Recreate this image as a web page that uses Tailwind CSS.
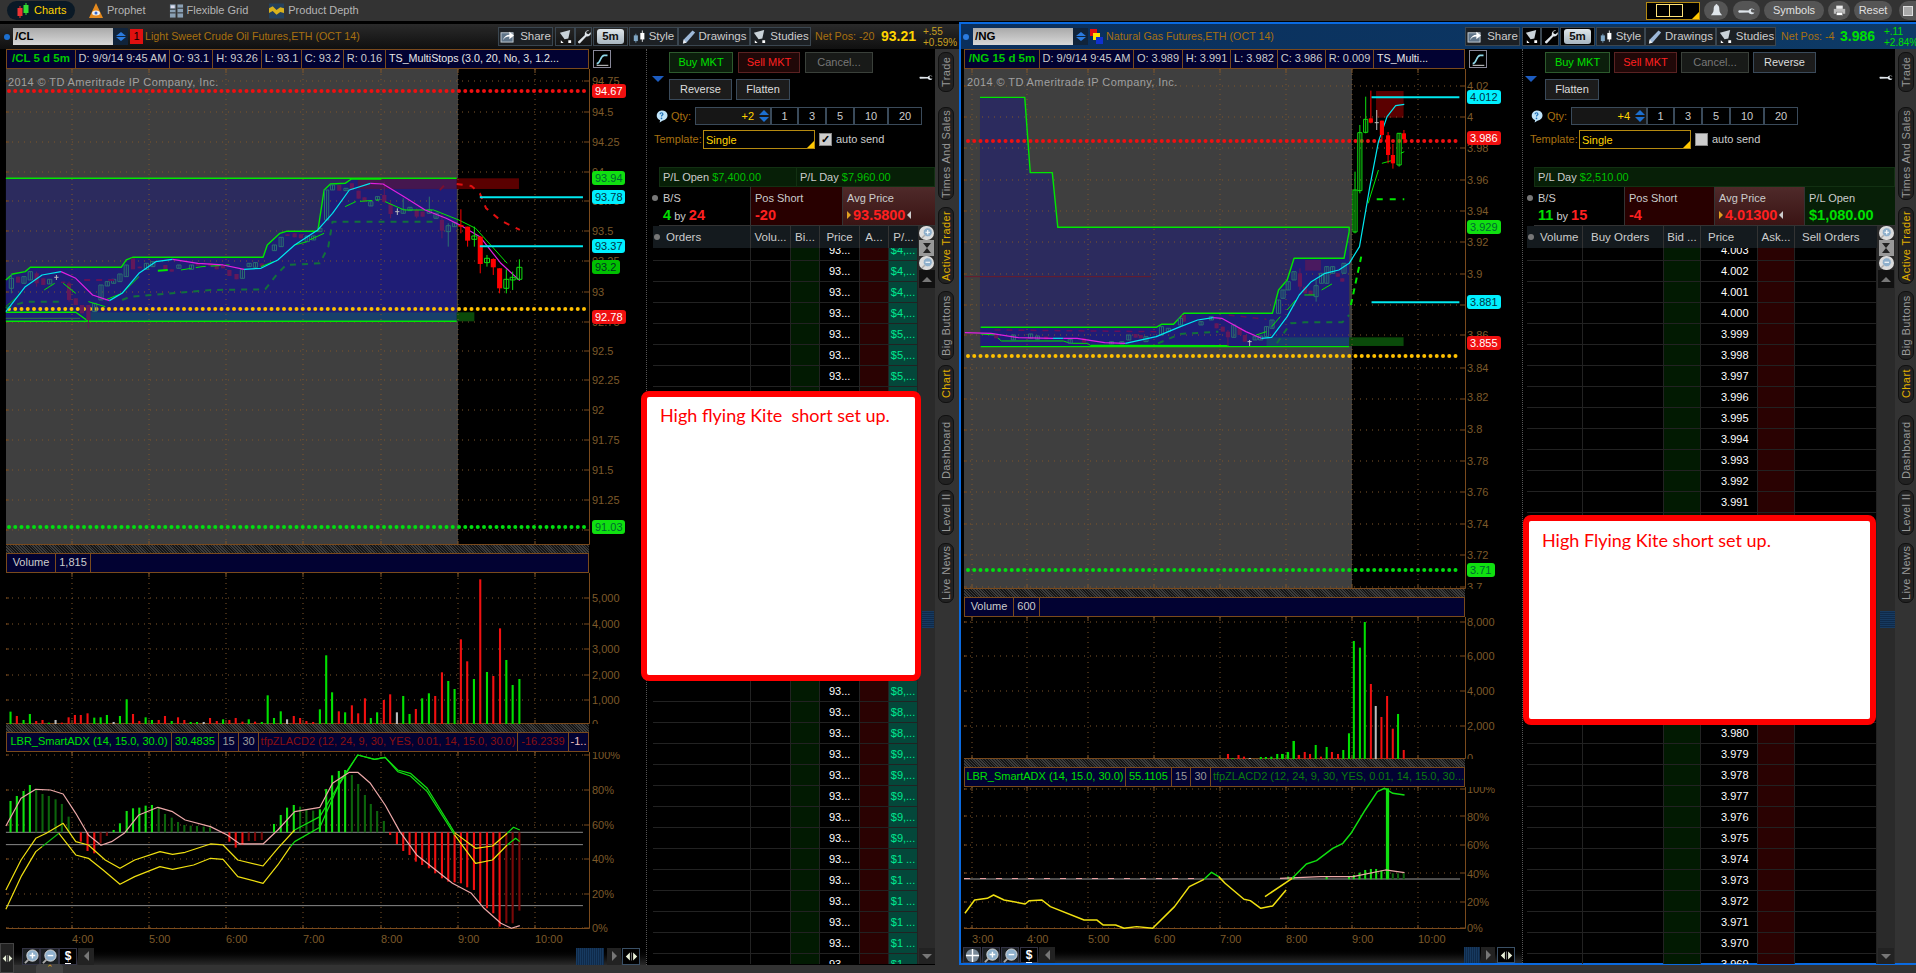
<!DOCTYPE html>
<html lang="en">
<head>
<meta charset="UTF-8">
<title>Charts - Active Trader</title>
<script src="https://cdn.jsdelivr.net/npm/@tailwindcss/browser@4"></script>
</head>
<body class="bg-[#333]">
<svg class="hidden">
  <symbol id="i-share" viewBox="0 0 16 14"><rect x="1" y="3" width="13" height="10" fill="#5f7488" stroke="#c5ced6"/><path d="M3 11c1-4 4-6 7-6V2l5 4-5 4V7c-3 0-5 1-7 4z" fill="#fff"/></symbol>
  <symbol id="i-studies" viewBox="0 0 16 16"><path d="M2 4l11-3-2 9-4 1z" fill="#c9d2d8"/><path d="M3 12v3h3zM11 12h3v3h-3z" fill="#fff"/></symbol>
  <symbol id="i-wrench" viewBox="0 0 16 16"><path d="M14 1.500a4 4 0 0 0-4.500 5L2 13.500l.5 1.500 1.500.500 7-7.500a4 4 0 0 0 4.800-4.500l-2.500 2-2-.6-.5-2z" fill="#dfe5ea"/></symbol>
  <symbol id="i-style" viewBox="0 0 16 16"><rect x="1" y="6" width="5" height="7" fill="#7fa6c4"/><path d="M3.500 4v11" stroke="#7fa6c4"/><rect x="9" y="3" width="5" height="8" fill="#fff"/><path d="M11.500 0v14" stroke="#fff"/></symbol>
  <symbol id="i-pencil" viewBox="0 0 16 16"><path d="M12 1l3 2.500L5 15l-4 1 1-4.500z" fill="#9db8d8"/><path d="M2 11.500L5 15l-4 1z" fill="#eee"/></symbol>
  <symbol id="i-charts" viewBox="0 0 16 16"><path d="M5 3v12" stroke="#e33"/><rect x="2.500" y="5" width="5" height="8" fill="#e33"/><path d="M11 0v12" stroke="#3d3"/><rect x="8.500" y="2" width="5" height="8" fill="#3d3"/></symbol>
  <symbol id="i-prophet" viewBox="0 0 16 16"><path d="M8 0l7 15H1z" fill="#e58a1e"/><ellipse cx="8" cy="10" rx="4" ry="2.500" fill="#eee"/><circle cx="8" cy="10" r="1.500" fill="#36c"/></symbol>
  <symbol id="i-grid" viewBox="0 0 16 16"><rect x="1" y="1" width="6" height="14" fill="#8aa0b4"/><rect x="9" y="1" width="6" height="14" fill="#8aa0b4"/><path d="M1 6h6M1 10h6M9 5h6M9 10h6" stroke="#222"/><rect x="2" y="2" width="4" height="3" fill="#dde"/></symbol>
  <symbol id="i-depth" viewBox="0 0 16 16"><rect width="16" height="16" fill="#24405c"/><path d="M0 5l4-2 4 4 4-3 4 1v5l-4-1-4 3-4-4-4 2z" fill="#d8b21e"/></symbol>
  <symbol id="i-bell" viewBox="0 0 16 16"><path d="M8 1c-1 0-1 1-1 1-2 1-2 3-2 5 0 3-2 5-3 6h12c-1-1-3-3-3-6 0-2 0-4-2-5 0 0 0-1-1-1z" fill="#dfe5ea"/></symbol>
  <symbol id="i-print" viewBox="0 0 16 16"><rect x="4" y="2" width="8" height="4" fill="#eee"/><rect x="1" y="6" width="14" height="6" fill="#bbb"/><rect x="4" y="10" width="8" height="4" fill="#fff" stroke="#333" stroke-width=".5"/></symbol>
  <symbol id="i-zoomin" viewBox="0 0 16 16"><circle cx="9" cy="7" r="6" fill="#8fb0cc" stroke="#ddd"/><path d="M6 7h6M9 4v6" stroke="#fff" stroke-width="1.500"/><path d="M5 11l-4 4" stroke="#aaa" stroke-width="2"/></symbol>
  <symbol id="i-zoomout" viewBox="0 0 16 16"><circle cx="9" cy="7" r="6" fill="#8fb0cc" stroke="#ddd"/><path d="M6 7h6" stroke="#fff" stroke-width="1.500"/><path d="M5 11l-4 4" stroke="#aaa" stroke-width="2"/></symbol>
  <symbol id="i-cross" viewBox="0 0 16 16"><circle cx="8" cy="8" r="7" fill="#7a8a99"/><path d="M8 1v14M1 8h14" stroke="#fff" stroke-width="1.500"/></symbol>
  <symbol id="i-expand" viewBox="0 0 16 16"><path d="M6 3v10L1 8zM10 3v10l5-5z" fill="#e8f0d8"/><path d="M8 3v10" stroke="#888"/></symbol>
  <symbol id="i-squiggle" viewBox="0 0 18 18"><path d="M2 14c5 0 4-10 9-10h4" fill="none" stroke="#8fd8e8" stroke-width="2"/><path d="M2 16h14" stroke="#fff"/></symbol>
  <symbol id="i-help" viewBox="0 0 14 14"><path d="M7 1a6 5.500 0 0 1 1 11l-3 2 .5-2.500A6 5.500 0 0 1 7 1z" fill="#bfe4fa"/><path d="M5.500 5c0-2 3-2 3 0 0 1-1.500 1-1.500 2.500" fill="none" stroke="#1c6fb8" stroke-width="1.300"/><circle cx="7" cy="9.500" r=".9" fill="#1c6fb8"/></symbol>
</svg>

<div class="relative w-[1916px] h-[973px] overflow-hidden flex flex-col text-[11px] text-[#ccc] font-['Liberation_Sans',Arial,sans-serif]">

  <!-- application top bar -->
  <div class="h-[21px] shrink-0 flex items-center bg-[#333] text-[11px] text-[#b5b5b5]">
    <div class="ml-[7px] w-[68px] h-[19px] rounded-full bg-[#0a1926] flex items-center pl-[8px] gap-[3px] text-[#ffd400]"><svg class="w-[16px] h-[16px]"><use href="#i-charts"/></svg>Charts</div>
    <svg class="ml-[13px] w-[16px] h-[16px]"><use href="#i-prophet"/></svg><span class="ml-[3px]">Prophet</span>
    <svg class="ml-[23px] w-[15px] h-[16px]"><use href="#i-grid"/></svg><span class="ml-[3px]">Flexible Grid</span>
    <svg class="ml-[21px] w-[15px] h-[16px]"><use href="#i-depth"/></svg><span class="ml-[4px]">Product Depth</span>
    <div class="ml-auto flex items-center text-[#e0e0e0]">
      <div class="relative w-[54px] h-[18px] bg-black border border-[#b58a10] flex items-center pl-[9px]"><span class="w-[14px] h-[13px] border border-[#ffe27a]"></span><span class="w-[14px] h-[13px] border border-[#ffe27a] -ml-px"></span><span class="absolute right-0 bottom-0 border-l-[7px] border-b-[7px] border-l-transparent border-b-[#ffc800]"></span></div>
      <div class="ml-[4px] w-[24px] h-[19px] rounded-full bg-[#555] flex items-center justify-center"><svg class="w-[15px] h-[15px]"><use href="#i-bell"/></svg></div>
      <div class="ml-[5px] w-[27px] h-[19px] rounded-full bg-[#555] flex items-center justify-center"><svg class="w-[15px] h-[15px] rotate-45"><use href="#i-wrench"/></svg></div>
      <div class="ml-[4px] w-[60px] h-[19px] rounded-full bg-[#555] flex items-center justify-center">Symbols</div>
      <div class="ml-[4px] w-[22px] h-[19px] rounded-full bg-[#555] flex items-center justify-center"><svg class="w-[13px] h-[13px]"><use href="#i-print"/></svg></div>
      <div class="ml-[4px] w-[38px] h-[19px] rounded-full bg-[#555] flex items-center justify-center">Reset</div>
      <div class="ml-[7px] w-[17px] h-[19px] rounded-l-full bg-[#555] flex items-center pl-[4px]"><span class="w-[10px] h-[10px] bg-[#aaa] border border-[#ddd]"></span></div>
    </div>
  </div>
  <div class="h-px shrink-0 bg-black"></div>

  <div class="flex h-[943px] shrink-0">
    <!-- left window -->
    <div class="w-[959px] shrink-0 flex flex-col">
      <div class="h-[2px] bg-black"></div>
      <div class="h-[25px] shrink-0 flex items-center bg-linear-to-b from-[#2a2a2a] to-[#101010]">
        <span class="ml-[4px] w-[6px] h-[6px] rounded-full bg-[#1c6fd0]"></span>
        <div class="ml-[3px] w-[100px] h-[17px] bg-linear-to-b from-[#aaa] to-[#d8d8d8] text-black font-bold text-[11.500px] pl-[2px] leading-[17px]">/CL</div>
        <div class="w-[15px] h-[17px] bg-[#10233a] flex flex-col items-center justify-center gap-px"><span class="border-x-[5px] border-b-[4px] border-x-transparent border-b-[#2b7be0]"></span><span class="border-x-[5px] border-t-[4px] border-x-transparent border-t-[#2b7be0]"></span></div>
        <div class="ml-[2px] w-[13px] h-[15px] bg-[#e01010] text-black text-[11px] text-center leading-[15px]">1</div>
        <span class="ml-[2px] text-[#a87010] text-[10.700px]">Light Sweet Crude Oil Futures,ETH (OCT 14)</span>
        <div class="ml-auto flex items-center h-[19px]">
          <div class="w-[55px] h-[19px] border border-[#3a4650] bg-[#1c2024] flex items-center justify-center gap-[5px] text-[11.500px]"><svg class="w-[15px] h-[13px]"><use href="#i-share"/></svg>Share</div>
          <div class="ml-[2px] w-[20px] h-[19px] border border-[#3a4650] flex items-center justify-center"><svg class="w-[15px] h-[15px]"><use href="#i-studies"/></svg></div>
          <div class="w-[17px] h-[19px] border border-[#3a4650] flex items-center justify-center"><svg class="w-[15px] h-[15px]"><use href="#i-wrench"/></svg></div>
          <div class="ml-px w-[35px] h-[19px] border border-[#3a4650] flex items-center justify-center"><span class="w-[27px] h-[15px] rounded-[3px] bg-linear-to-b from-[#dfe6ea] to-[#a8b6c0] text-[#111] font-bold text-[11.500px] text-center leading-[15px]">5m</span></div>
          <div class="ml-px w-[49px] h-[19px] border border-[#3a4650] bg-[#1c2024] flex items-center justify-center gap-[3px] text-[11.500px]"><svg class="w-[13px] h-[14px]"><use href="#i-style"/></svg>Style</div>
          <div class="w-[72px] h-[19px] border border-[#3a4650] bg-[#1c2024] flex items-center justify-center gap-[3px] text-[11.500px]"><svg class="w-[14px] h-[15px]"><use href="#i-pencil"/></svg>Drawings</div>
          <div class="w-[61px] h-[19px] border border-[#3a4650] bg-[#1c2024] flex items-center justify-center gap-[3px] text-[11.500px]"><svg class="w-[15px] h-[15px]"><use href="#i-studies"/></svg>Studies</div>
          <span class="ml-[4px] w-[61px] text-[#a87010] text-[10.700px] whitespace-nowrap">Net Pos: -20</span>
          <span class="ml-[5px] w-[36px] text-[#ffd400] font-bold text-[14px]">93.21</span>
          <div class="ml-[6px] w-[36px] text-[#c8a020] text-[10px] leading-[11px]">+.55<br>+0.59%</div>
        </div>
      </div>
      <div class="flex flex-1 min-h-0">
        <!-- chart column -->
        <div class="w-[646px] shrink-0 flex flex-col bg-black">
          <div class="flex items-center h-[20px] shrink-0">
            <div class="ml-[6px] w-[583px] h-[20px] flex bg-[#020232] border border-[#7a4a1c] leading-[17px]">
              <div class="w-[69px] border-r border-[#7a4a1c] text-center text-[#00c800] font-bold text-[11.500px]">/CL 5 d 5m</div>
              <div class="w-[94px] border-r border-[#7a4a1c] text-center">D: 9/9/14 9:45 AM</div>
              <div class="w-[43px] border-r border-[#7a4a1c] text-center">O: 93.1</div>
              <div class="w-[49px] border-r border-[#7a4a1c] text-center">H: 93.26</div>
              <div class="w-[40px] border-r border-[#7a4a1c] text-center">L: 93.1</div>
              <div class="w-[42px] border-r border-[#7a4a1c] text-center">C: 93.2</div>
              <div class="w-[42px] border-r border-[#7a4a1c] text-center">R: 0.16</div>
              <div class="flex-1 pl-[3px] text-[#e8e8e8] text-[10.700px]">TS_MultiStops (3.0, 20, No, 3, 1.2...</div>
            </div>
            <div class="ml-[4px] w-[18px] h-[18px] border border-[#889] flex items-center justify-center"><svg class="w-[15px] h-[15px]"><use href="#i-squiggle"/></svg></div>
          </div>
          <svg id="lp" class="block shrink-0 w-[646px] h-[476px]" viewBox="0 69 646 476"></svg>
          <div class="ml-[6px] w-[583px] h-[8px] shrink-0 bg-[repeating-linear-gradient(45deg,#3c3c3c_0_1px,#161616_1px_2px)]"></div>
          <div class="ml-[6px] w-[583px] h-[20px] shrink-0 flex bg-[#020232] border border-[#7a4a1c] leading-[17px]">
            <div class="w-[49px] border-r border-[#7a4a1c] text-center">Volume</div>
            <div class="w-[35px] border-r border-[#7a4a1c] text-center">1,815</div>
          </div>
          <svg id="lv" class="block shrink-0 w-[646px] h-[151px]" viewBox="0 573 646 151"></svg>
          <div class="ml-[6px] w-[583px] h-[8px] shrink-0 bg-[repeating-linear-gradient(45deg,#3c3c3c_0_1px,#161616_1px_2px)]"></div>
          <div class="ml-[6px] w-[583px] h-[20px] shrink-0 flex bg-[#020232] border border-[#7a4a1c] leading-[17px] whitespace-nowrap overflow-hidden">
            <div class="w-[165px] border-r border-[#7a4a1c] text-center text-[#00e000]">LBR_SmartADX (14, 15.0, 30.0)</div>
            <div class="w-[47px] border-r border-[#7a4a1c] text-center text-[#00e000]">30.4835</div>
            <div class="w-[20px] border-r border-[#7a4a1c] text-center text-[#999]">15</div>
            <div class="w-[20px] border-r border-[#7a4a1c] text-center text-[#999]">30</div>
            <div class="w-[259px] border-r border-[#7a4a1c] text-center text-[#8a1010]">tfpZLACD2 (12, 24, 9, 30, YES, 0.01, 14, 15.0, 30.0)</div>
            <div class="w-[51px] border-r border-[#7a4a1c] text-center text-[#8a1010]">-16.2339</div>
            <div class="flex-1 text-center text-[#f0c0c0]">-1..</div>
          </div>
          <svg id="li" class="block shrink-0 w-[646px] h-[195px]" viewBox="0 752 646 195"></svg>
          <div class="h-[18px] shrink-0 flex items-center bg-linear-to-b from-black to-[#2a2a2a]">
            <div class="ml-[22px] w-[18px] h-[17px] border border-[#334] bg-[#1c2024] flex items-center justify-center"><svg class="w-[15px] h-[15px]"><use href="#i-zoomin"/></svg></div>
            <div class="w-[19px] h-[17px] border border-[#334] bg-[#1c2024] flex items-center justify-center"><svg class="w-[15px] h-[15px]"><use href="#i-zoomout"/></svg></div>
            <div class="w-[18px] h-[17px] border border-[#334] bg-black text-center text-white font-bold text-[12px] leading-[15px]"><span class="border-b border-white">$</span></div>
            <div class="ml-[1px] w-[16px] h-[17px] bg-[#222] flex items-center justify-center"><span class="border-y-[5px] border-r-[5px] border-y-transparent border-r-[#777]"></span></div>
            <div class="ml-auto w-[28px] h-[17px] bg-[repeating-linear-gradient(90deg,#173a60_0_1px,#0f2a4a_1px_2px)]"></div>
            <div class="ml-[3px] w-[14px] h-[17px] bg-[#222] flex items-center justify-center"><span class="border-y-[5px] border-l-[5px] border-y-transparent border-l-[#777]"></span></div>
            <div class="ml-px mr-[6px] w-[18px] h-[17px] border border-[#3a5066] bg-black flex items-center justify-center"><svg class="w-[15px] h-[13px]"><use href="#i-expand"/></svg></div>
          </div>
        </div>
        <!-- trade column -->
        <div class="relative w-[289px] shrink-0 bg-black border-l border-dotted border-[#555]">
          <span class="absolute left-[5px] top-[27px] border-x-[6px] border-t-[6px] border-x-transparent border-t-[#1c5cc0]"></span>
          <svg class="absolute left-[271px] top-[22px] w-[16px] h-[12px] rotate-45"><use href="#i-wrench"/></svg>
          <div class="pt-[3px] pl-[22px] flex gap-[5px]">
            <div class="w-[64px] h-[21px] border border-[#2d5a2d] bg-[#0c1e0c] text-[#00e000] flex items-center justify-center">Buy MKT</div>
            <div class="w-[62px] h-[21px] border border-[#5a2222] bg-[#200808] text-[#ff2020] flex items-center justify-center">Sell MKT</div>
            <div class="w-[68px] h-[21px] border border-[#3a403a] bg-[#181a18] text-[#777] flex items-center justify-center">Cancel...</div>
          </div>
          <div class="mt-[6px] pl-[22px] flex gap-[4px]">
            <div class="w-[63px] h-[21px] border border-[#3a4a5a] bg-[#1c1c1c] text-[#ddd] flex items-center justify-center">Reverse</div>
            <div class="w-[54px] h-[21px] border border-[#3a4a5a] bg-[#1c1c1c] text-[#ddd] flex items-center justify-center">Flatten</div>
          </div>
          <div class="mt-[7px] h-[18px] flex items-center">
            <svg class="ml-[8px] w-[13px] h-[14px]"><use href="#i-help"/></svg>
            <span class="ml-[3px] w-[24px] text-[#a87010]">Qty:</span>
            <div class="w-[76px] h-[18px] border border-[#3a4a5a] bg-[#161616] flex items-center justify-end text-[#ffd400]">+2<div class="ml-[3px] w-[13px] flex flex-col items-center gap-[2px]"><span class="border-x-[5px] border-b-[5px] border-x-transparent border-b-[#1c6fd0]"></span><span class="border-x-[5px] border-t-[5px] border-x-transparent border-t-[#1c6fd0]"></span></div></div>
            <div class="w-[27px] h-[18px] border border-[#3a4a5a] text-center leading-[16px]">1</div>
            <div class="w-[28px] h-[18px] border border-[#3a4a5a] text-center leading-[16px]">3</div>
            <div class="w-[28px] h-[18px] border border-[#3a4a5a] text-center leading-[16px]">5</div>
            <div class="w-[34px] h-[18px] border border-[#3a4a5a] text-center leading-[16px]">10</div>
            <div class="w-[34px] h-[18px] border border-[#3a4a5a] text-center leading-[16px]">20</div>
          </div>
          <div class="mt-[5px] h-[19px] flex items-center">
            <span class="ml-[7px] w-[49px] text-[#a87010]">Template:</span>
            <div class="relative w-[112px] h-[19px] border border-[#b58a10] bg-black pl-[2px] text-[#ffd400] leading-[18px]">Single<span class="absolute right-0 bottom-0 border-l-[7px] border-b-[7px] border-l-transparent border-b-[#ffc800]"></span></div>
            <div class="ml-[4px] w-[13px] h-[13px] bg-[#ccc] border border-[#888] text-black font-bold leading-[11px] text-center">✓</div>
            <span class="ml-[4px]">auto send</span>
          </div>
          <div class="mt-[18px] ml-[12px] w-[276px] h-[20px] flex bg-[#071f07] border border-[#123012] leading-[18px]">
            <div class="w-[137px] border-r border-[#123012] pl-[3px]">P/L Open <span class="text-[#00c000]">$7,400.00</span></div>
            <div class="flex-1 pl-[3px]">P/L Day <span class="text-[#00c000]">$7,960.00</span></div>
          </div>
          <div class="relative ml-[12px] w-[276px] h-[39px] flex leading-[14px] border-b border-[#333]">
            <span class="absolute -left-[7px] top-[8px] w-[6px] h-[6px] rounded-full bg-[#777]"></span>
            <div class="w-[91px] bg-black pl-[4px] pt-[4px]">B/S<div class="mt-px leading-[18px]"><span class="text-[#00e000] font-bold text-[14.500px]">4</span> by <span class="text-[#ff2020] font-bold text-[14.500px]">24</span></div></div>
            <div class="w-[92px] bg-[#280000] pl-[4px] pt-[4px] border-l border-[#333]">Pos Short<div class="mt-px leading-[18px] text-[#ff2020] font-bold text-[14.500px]">-20</div></div>
            <div class="flex-1 bg-linear-to-b from-[#4f2a2a] to-[#3a1414] pl-[4px] pt-[4px] border-l border-[#333]">Avg Price<div class="mt-px leading-[18px] flex items-center gap-[2px] text-[#ff2020] font-bold text-[14.500px]"><span class="border-y-[4px] border-l-[4px] border-y-transparent border-l-[#e0a020]"></span>93.5800<span class="border-y-[4px] border-r-[4px] border-y-transparent border-r-[#ccc]"></span></div></div>
          </div>
          <div class="flex ml-[6px]">
            <div class="w-[265px]">
              <div class="flex h-[22px] bg-[#141a1e] text-[11.500px] leading-[22px]">
                <div class="w-[98px] border-r border-[#333] flex items-center"><span class="ml-[1px] w-[6px] h-[6px] rounded-full bg-[#777]"></span><span class="ml-[6px]">Orders</span></div>
                <div class="w-[40px] border-r border-[#333] text-center">Volu...</div>
                <div class="w-[29px] border-r border-[#333] text-center">Bi...</div>
                <div class="w-[40px] border-r border-[#333] text-center">Price</div>
                <div class="w-[29px] border-r border-[#333] text-center">A...</div>
                <div class="w-[29px] text-center">P/...</div>
              </div>
              <div class="h-[716px] overflow-hidden"><div id="lrows" class="-mt-[8px]"></div></div>
            </div>
            <div class="w-[17px] flex flex-col items-center bg-[#2a2a2a]">
              <div class="w-[15px] h-[14px] bg-[#ddd] rounded-full flex items-center justify-center"><svg class="w-[12px] h-[12px]"><use href="#i-zoomin"/></svg></div>
              <div class="w-[15px] h-[16px] bg-[#999] flex flex-col items-center justify-center"><span class="border-x-[4px] border-t-[5px] border-x-transparent border-t-[#222]"></span><span class="border-x-[4px] border-b-[5px] border-x-transparent border-b-[#222]"></span></div>
              <div class="w-[15px] h-[14px] bg-[#ddd] rounded-full flex items-center justify-center"><svg class="w-[12px] h-[12px]"><use href="#i-zoomout"/></svg></div>
              <div class="w-[16px] h-[18px] bg-[#111] flex items-center justify-center"><span class="border-x-[5px] border-b-[5px] border-x-transparent border-b-[#777]"></span></div>
              <div class="mt-[323px] w-[12px] h-[17px] ml-[3px] bg-[repeating-linear-gradient(0deg,#173a60_0_1px,#0f2a4a_1px_2px)]"></div>
              <div class="mt-auto w-[16px] h-[16px] bg-[#222] flex items-center justify-center"><span class="border-x-[5px] border-t-[5px] border-x-transparent border-t-[#777]"></span></div>
            </div>
          </div>
        </div>
        <div id="lrail" class="w-[21px] shrink-0 bg-[#333] flex flex-col items-center"></div>
      </div>
    </div>

    <!-- right window -->
    <div class="w-[957px] shrink-0 flex flex-col border-2 border-r-0 border-[#0a6ae0]">
      <div class="h-[25px] shrink-0 flex items-center bg-linear-to-r from-[#0a2f5c] to-[#0d3a66]">
        <span class="ml-[2px] w-[6px] h-[6px] rounded-full bg-[#2b7be0]"></span>
        <div class="ml-[4px] w-[100px] h-[17px] bg-linear-to-b from-[#aaa] to-[#d8d8d8] text-black font-bold text-[11.500px] pl-[2px] leading-[17px]">/NG</div>
        <div class="w-[15px] h-[17px] bg-[#10233a] flex flex-col items-center justify-center gap-px"><span class="border-x-[5px] border-b-[4px] border-x-transparent border-b-[#2b7be0]"></span><span class="border-x-[5px] border-t-[4px] border-x-transparent border-t-[#2b7be0]"></span></div>
        <div class="relative ml-[2px] w-[14px] h-[15px]"><span class="absolute left-0 top-0 w-[7px] h-[7px] bg-[#e01010]"></span><span class="absolute left-[3px] top-[4px] w-[7px] h-[7px] bg-[#ffe000]"></span><span class="absolute left-[6px] top-[8px] w-[7px] h-[7px] bg-[#1030d0]"></span></div>
        <span class="ml-[2px] text-[#a87010] text-[10.700px]">Natural Gas Futures,ETH (OCT 14)</span>
        <div class="ml-auto flex items-center h-[19px]">
          <div class="w-[55px] h-[19px] border border-[#3a4650] bg-[#1c2024] flex items-center justify-center gap-[5px] text-[11.500px]"><svg class="w-[15px] h-[13px]"><use href="#i-share"/></svg>Share</div>
          <div class="ml-[2px] w-[19px] h-[19px] border border-[#3a4650] bg-black flex items-center justify-center"><svg class="w-[15px] h-[15px]"><use href="#i-studies"/></svg></div>
          <div class="w-[18px] h-[19px] border border-[#3a4650] bg-black flex items-center justify-center"><svg class="w-[15px] h-[15px]"><use href="#i-wrench"/></svg></div>
          <div class="ml-px w-[35px] h-[19px] border border-[#3a4650] bg-black flex items-center justify-center"><span class="w-[27px] h-[15px] rounded-[3px] bg-linear-to-b from-[#dfe6ea] to-[#a8b6c0] text-[#111] font-bold text-[11.500px] text-center leading-[15px]">5m</span></div>
          <div class="ml-px w-[49px] h-[19px] border border-[#3a4650] bg-[#1c2024] flex items-center justify-center gap-[3px] text-[11.500px]"><svg class="w-[13px] h-[14px]"><use href="#i-style"/></svg>Style</div>
          <div class="w-[71px] h-[19px] border border-[#3a4650] bg-[#1c2024] flex items-center justify-center gap-[3px] text-[11.500px]"><svg class="w-[14px] h-[15px]"><use href="#i-pencil"/></svg>Drawings</div>
          <div class="w-[60px] h-[19px] border border-[#3a4650] bg-[#1c2024] flex items-center justify-center gap-[3px] text-[11.500px]"><svg class="w-[15px] h-[15px]"><use href="#i-studies"/></svg>Studies</div>
          <span class="ml-[5px] w-[55px] text-[#a87010] text-[10.700px] whitespace-nowrap">Net Pos: -4</span>
          <span class="ml-[4px] w-[39px] text-[#00e000] font-bold text-[14px]">3.986</span>
          <div class="ml-[5px] w-[32px] text-[#00e000] text-[10px] leading-[11px] whitespace-nowrap">+.11<br>+2.84%</div>
        </div>
      </div>
      <div class="flex flex-1 min-h-0">
        <div class="w-[561px] shrink-0 flex flex-col bg-black">
          <div class="flex items-center h-[20px] shrink-0">
            <div class="ml-[3px] w-[501px] h-[20px] flex bg-[#020232] border border-[#7a4a1c] leading-[17px] whitespace-nowrap">
              <div class="w-[75px] border-r border-[#7a4a1c] text-center text-[#00c800] font-bold text-[11.500px]">/NG 15 d 5m</div>
              <div class="w-[94px] border-r border-[#7a4a1c] text-center">D: 9/9/14 9:45 AM</div>
              <div class="w-[49px] border-r border-[#7a4a1c] text-center">O: 3.989</div>
              <div class="w-[48px] border-r border-[#7a4a1c] text-center">H: 3.991</div>
              <div class="w-[47px] border-r border-[#7a4a1c] text-center">L: 3.982</div>
              <div class="w-[48px] border-r border-[#7a4a1c] text-center">C: 3.986</div>
              <div class="w-[48px] border-r border-[#7a4a1c] text-center">R: 0.009</div>
              <div class="flex-1 pl-[3px] text-[#e8e8e8] text-[10.700px]">TS_Multi...</div>
            </div>
            <div class="ml-[4px] w-[18px] h-[18px] border border-[#889] flex items-center justify-center"><svg class="w-[15px] h-[15px]"><use href="#i-squiggle"/></svg></div>
          </div>
          <svg id="rp" class="block shrink-0 w-[561px] h-[520px]" viewBox="961 69 561 520"></svg>
          <div class="ml-[3px] w-[501px] h-[8px] shrink-0 bg-[repeating-linear-gradient(45deg,#3c3c3c_0_1px,#161616_1px_2px)]"></div>
          <div class="ml-[3px] w-[501px] h-[20px] shrink-0 flex bg-[#020232] border border-[#7a4a1c] leading-[17px]">
            <div class="w-[49px] border-r border-[#7a4a1c] text-center">Volume</div>
            <div class="w-[26px] border-r border-[#7a4a1c] text-center">600</div>
          </div>
          <svg id="rv" class="block shrink-0 w-[561px] h-[142px]" viewBox="961 617 561 142"></svg>
          <div class="ml-[3px] w-[501px] h-[8px] shrink-0 bg-[repeating-linear-gradient(45deg,#3c3c3c_0_1px,#161616_1px_2px)]"></div>
          <div class="ml-[3px] w-[501px] h-[20px] shrink-0 flex bg-[#020232] border border-[#7a4a1c] leading-[17px] whitespace-nowrap overflow-hidden">
            <div class="w-[165px] border-r border-[#7a4a1c] text-center text-[#00e000]">LBR_SmartADX (14, 15.0, 30.0)</div>
            <div class="w-[47px] border-r border-[#7a4a1c] text-center text-[#00e000]">55.1105</div>
            <div class="w-[20px] border-r border-[#7a4a1c] text-center text-[#999]">15</div>
            <div class="w-[20px] border-r border-[#7a4a1c] text-center text-[#999]">30</div>
            <div class="flex-1 pl-[2px] text-[#0d7a0d]">tfpZLACD2 (12, 24, 9, 30, YES, 0.01, 14, 15.0, 30...</div>
          </div>
          <svg id="ri" class="block shrink-0 w-[561px] h-[160px]" viewBox="961 787 561 160"></svg>
          <div class="h-[16px] shrink-0 flex items-center bg-linear-to-b from-black to-[#2a2a2a]">
            <div class="ml-[2px] w-[18px] h-[16px] border border-[#334] bg-[#1c2024] flex items-center justify-center"><svg class="w-[15px] h-[15px]"><use href="#i-cross"/></svg></div>
            <div class="ml-px w-[18px] h-[16px] border border-[#334] bg-[#1c2024] flex items-center justify-center"><svg class="w-[15px] h-[15px]"><use href="#i-zoomin"/></svg></div>
            <div class="ml-px w-[18px] h-[16px] border border-[#334] bg-[#1c2024] flex items-center justify-center"><svg class="w-[15px] h-[15px]"><use href="#i-zoomout"/></svg></div>
            <div class="ml-px w-[18px] h-[16px] border border-[#334] bg-black text-center text-white font-bold text-[12px] leading-[14px]"><span class="border-b border-white">$</span></div>
            <div class="ml-px w-[16px] h-[16px] bg-[#222] flex items-center justify-center"><span class="border-y-[5px] border-r-[5px] border-y-transparent border-r-[#777]"></span></div>
            <div class="ml-auto w-[16px] h-[16px] bg-[repeating-linear-gradient(90deg,#173a60_0_1px,#0f2a4a_1px_2px)]"></div>
            <div class="ml-px w-[14px] h-[16px] bg-[#222] flex items-center justify-center"><span class="border-y-[5px] border-l-[5px] border-y-transparent border-l-[#777]"></span></div>
            <div class="ml-[2px] mr-[7px] w-[18px] h-[16px] border border-[#3a5066] bg-black flex items-center justify-center"><svg class="w-[15px] h-[13px]"><use href="#i-expand"/></svg></div>
          </div>
        </div>
        <div class="relative w-[373px] shrink-0 bg-black border-l border-dotted border-[#555]">
          <span class="absolute left-[2px] top-[27px] border-x-[6px] border-t-[6px] border-x-transparent border-t-[#1c5cc0]"></span>
          <svg class="absolute left-[355px] top-[22px] w-[16px] h-[12px] rotate-45"><use href="#i-wrench"/></svg>
          <div class="pt-[3px] pl-[22px] flex gap-[4px]">
            <div class="w-[65px] h-[21px] border border-[#2d5a2d] bg-[#0c1e0c] text-[#00e000] flex items-center justify-center">Buy MKT</div>
            <div class="w-[63px] h-[21px] border border-[#5a2222] bg-[#200808] text-[#ff2020] flex items-center justify-center">Sell MKT</div>
            <div class="w-[68px] h-[21px] border border-[#3a403a] bg-[#181a18] text-[#777] flex items-center justify-center">Cancel...</div>
            <div class="w-[63px] h-[21px] border border-[#3a4a5a] bg-[#1c1c1c] text-[#ddd] flex items-center justify-center">Reverse</div>
          </div>
          <div class="mt-[6px] pl-[22px]">
            <div class="w-[54px] h-[21px] border border-[#3a4a5a] bg-[#1c1c1c] text-[#ddd] flex items-center justify-center">Flatten</div>
          </div>
          <div class="mt-[7px] h-[18px] flex items-center">
            <svg class="ml-[7px] w-[13px] h-[14px]"><use href="#i-help"/></svg>
            <span class="ml-[4px] w-[24px] text-[#a87010]">Qty:</span>
            <div class="w-[76px] h-[18px] border border-[#3a4a5a] bg-[#161616] flex items-center justify-end text-[#ffd400]">+4<div class="ml-[3px] w-[13px] flex flex-col items-center gap-[2px]"><span class="border-x-[5px] border-b-[5px] border-x-transparent border-b-[#1c6fd0]"></span><span class="border-x-[5px] border-t-[5px] border-x-transparent border-t-[#1c6fd0]"></span></div></div>
            <div class="w-[27px] h-[18px] border border-[#3a4a5a] text-center leading-[16px]">1</div>
            <div class="w-[28px] h-[18px] border border-[#3a4a5a] text-center leading-[16px]">3</div>
            <div class="w-[28px] h-[18px] border border-[#3a4a5a] text-center leading-[16px]">5</div>
            <div class="w-[34px] h-[18px] border border-[#3a4a5a] text-center leading-[16px]">10</div>
            <div class="w-[34px] h-[18px] border border-[#3a4a5a] text-center leading-[16px]">20</div>
          </div>
          <div class="mt-[5px] h-[19px] flex items-center">
            <span class="ml-[7px] w-[49px] text-[#a87010]">Template:</span>
            <div class="relative w-[112px] h-[19px] border border-[#b58a10] bg-black pl-[2px] text-[#ffd400] leading-[18px]">Single<span class="absolute right-0 bottom-0 border-l-[7px] border-b-[7px] border-l-transparent border-b-[#ffc800]"></span></div>
            <div class="ml-[4px] w-[13px] h-[13px] bg-[#ccc] border border-[#888]"></div>
            <span class="ml-[4px]">auto send</span>
          </div>
          <div class="mt-[18px] ml-[11px] w-[361px] h-[20px] bg-[#071f07] border border-[#123012] leading-[18px] pl-[3px]">P/L Day <span class="text-[#00c000]">$2,510.00</span></div>
          <div class="relative ml-[11px] w-[361px] h-[39px] flex leading-[14px] border-b border-[#333]">
            <span class="absolute -left-[7px] top-[8px] w-[6px] h-[6px] rounded-full bg-[#777]"></span>
            <div class="w-[90px] bg-black pl-[4px] pt-[4px]">B/S<div class="mt-px leading-[18px]"><span class="text-[#00e000] font-bold text-[14.500px]">11</span> by <span class="text-[#ff2020] font-bold text-[14.500px]">15</span></div></div>
            <div class="w-[90px] bg-[#280000] pl-[4px] pt-[4px] border-l border-[#333]">Pos Short<div class="mt-px leading-[18px] text-[#ff2020] font-bold text-[14.500px]">-4</div></div>
            <div class="w-[90px] bg-linear-to-b from-[#4f2a2a] to-[#3a1414] pl-[4px] pt-[4px] border-l border-[#333]">Avg Price<div class="mt-px leading-[18px] flex items-center gap-[2px] text-[#ff2020] font-bold text-[14.500px]"><span class="border-y-[4px] border-l-[4px] border-y-transparent border-l-[#e0a020]"></span>4.01300<span class="border-y-[4px] border-r-[4px] border-y-transparent border-r-[#ccc]"></span></div></div>
            <div class="flex-1 bg-[#071f07] pl-[4px] pt-[4px] border-l border-[#333]">P/L Open<div class="mt-px leading-[18px] text-[#00e000] font-bold text-[14.500px]">$1,080.00</div></div>
          </div>
          <div class="flex ml-[4px]">
            <div class="w-[350px]">
              <div class="flex h-[22px] bg-[#141a1e] text-[11.500px] leading-[22px]">
                <div class="w-[56px] border-r border-[#333] flex items-center"><span class="ml-[1px] w-[6px] h-[6px] rounded-full bg-[#777]"></span><span class="ml-[6px]">Volume</span></div>
                <div class="w-[81px] border-r border-[#333] pl-[8px]">Buy Orders</div>
                <div class="w-[37px] border-r border-[#333] text-center">Bid ...</div>
                <div class="w-[57px] border-r border-[#333] pl-[7px]">Price</div>
                <div class="w-[37px] border-r border-[#333] text-center">Ask...</div>
                <div class="w-[82px] pl-[7px]">Sell Orders</div>
              </div>
              <div class="h-[716px] overflow-hidden"><div id="rrows" class="-mt-[8px]"></div></div>
            </div>
            <div class="w-[18px] flex flex-col items-center bg-[#2a2a2a]">
              <div class="w-[15px] h-[14px] bg-[#ddd] rounded-full flex items-center justify-center"><svg class="w-[12px] h-[12px]"><use href="#i-zoomin"/></svg></div>
              <div class="w-[15px] h-[16px] bg-[#999] flex flex-col items-center justify-center"><span class="border-x-[4px] border-t-[5px] border-x-transparent border-t-[#222]"></span><span class="border-x-[4px] border-b-[5px] border-x-transparent border-b-[#222]"></span></div>
              <div class="w-[15px] h-[14px] bg-[#ddd] rounded-full flex items-center justify-center"><svg class="w-[12px] h-[12px]"><use href="#i-zoomout"/></svg></div>
              <div class="w-[16px] h-[18px] bg-[#111] flex items-center justify-center"><span class="border-x-[5px] border-b-[5px] border-x-transparent border-b-[#777]"></span></div>
              <div class="mt-[323px] w-[15px] h-[17px] ml-[2px] bg-[repeating-linear-gradient(0deg,#173a60_0_1px,#0f2a4a_1px_2px)]"></div>
              <div class="mt-auto w-[16px] h-[16px] bg-[#222] flex items-center justify-center"><span class="border-x-[5px] border-t-[5px] border-x-transparent border-t-[#777]"></span></div>
            </div>
          </div>
        </div>
        <div id="rrail" class="w-[21px] shrink-0 bg-[#333] flex flex-col items-center"></div>
      </div>
    </div>
  </div>

  <!-- comment boxes drawn on the screenshot -->
  <div class="absolute left-[641px] top-[391px] w-[280px] h-[290px] bg-white border-[6px] border-[#f00] rounded-[8px] pl-[13px] pt-[6px] text-[#f00] text-[18px] leading-[24px] font-['Lato',sans-serif] whitespace-pre">High flying Kite  short set up.</div>
  <div class="absolute left-[1523px] top-[515px] w-[353px] h-[210px] bg-white border-[6px] border-[#f00] rounded-[8px] pl-[13px] pt-[7px] text-[#f00] text-[18px] leading-[24px] font-['Lato',sans-serif]">High Flying Kite short set up.</div>

  <!-- little corner bits at the bottom left -->
  <div class="absolute left-0 top-[943px] w-[14px] h-[30px] bg-[#222] border border-[#444] flex items-center justify-center"><svg class="w-[11px] h-[11px]"><use href="#i-expand"/></svg></div>
  <div class="absolute left-[36px] top-[964px] w-[27px] h-[9px] rounded-t-[4px] bg-[#444] text-[#d8a020] text-[9px] leading-[9px] text-center">⌃</div>
</div>

<script>
  const BROWN = '#80562a', AXIS = '#7a4a1c', GREEN = '#00e800', RED = '#ff1010', CYAN = '#00e8f0', MAG = '#e020e0'

  const line = (p, c, w = 1, dash = '') =>
    `<polyline points="${p}" fill="none" stroke="${c}" stroke-width="${w}" stroke-dasharray="${dash}" stroke-linejoin="round" vector-effect="non-scaling-stroke"/>`
  const dots = (x0, x1, y, c) =>
    `<line x1="${x0}" x2="${x1}" y1="${y}" y2="${y}" stroke="${c}" stroke-width="4" stroke-linecap="round" stroke-dasharray="0 6.25"/>`
  const rect = (x, y, w, h, c) => `<rect x="${x}" y="${y}" width="${w}" height="${h}" fill="${c}"/>`
  const poly = (p, c) => `<polygon points="${p}" fill="${c}"/>`
  const watermark = x => `<text x="${x}" y="86" fill="#a0a0a0" font-size="11" letter-spacing=".4">2014 © TD Ameritrade IP Company, Inc.</text>`

  function grid(xs, ys, x0, x1, y0, y1) {
    let s = ''
    xs.forEach(x => {
      s += `<line x1="${x}" x2="${x}" y1="${y0}" y2="${y1}" stroke="${BROWN}" stroke-dasharray="1 4"/>`
      s += `<line x1="${x}" x2="${x}" y1="${y0}" y2="${y0 + 4}" stroke="${BROWN}"/>`
      s += `<line x1="${x}" x2="${x}" y1="${y1 - 4}" y2="${y1}" stroke="${BROWN}"/>`
    })
    ys.forEach(y => {
      s += `<line x1="${x0}" x2="${x1 - 5}" y1="${y}" y2="${y}" stroke="${BROWN}" stroke-dasharray="1 5"/>`
      s += `<line x1="${x1 - 5}" x2="${x1}" y1="${y}" y2="${y}" stroke="${AXIS}"/>`
      s += `<line x1="${x0}" x2="${x0 + 3}" y1="${y}" y2="${y}" stroke="${AXIS}"/>`
    })
    s += `<path d="M${x0} ${y1 - .5}H${x1 + .5}V${y0}" fill="none" stroke="${AXIS}"/>`
    return s
  }
  const labels = (list, x) => list.map(([t, y]) =>
    `<text x="${x}" y="${y + 4}" fill="#7d5a2a" font-size="11">${t}</text>`).join('')
  const tag = (x, y, w, bg, fg, t) =>
    `<rect x="${x}" y="${y - 7}" width="${w}" height="14" rx="3" fill="${bg}"/><text x="${x + 3}" y="${y + 4}" fill="${fg}" font-size="11">${t}</text>`

  // each candle is x, body top, body bottom, wick top, wick bottom
  function candles(list, stroke, fill, bw) {
    return list.map(([k, x, t, b, wt, wb]) => {
      const wick = `<line x1="${x}" x2="${x}" y1="${wt ?? t}" y2="${wb ?? b}" stroke="${k == 'g' ? stroke : k == 'w' ? '#bbb' : fill}" vector-effect="non-scaling-stroke"/>`
      if (k == 'g') return wick + `<rect x="${x - bw}" y="${t}" width="${bw * 2}" height="${b - t}" fill="#0000" stroke="${stroke}" vector-effect="non-scaling-stroke"/>`
      if (k == 'w') return wick + `<line x1="${x - bw}" x2="${x + bw}" y1="${t}" y2="${t}" stroke="#bbb" vector-effect="non-scaling-stroke"/>`
      return wick + `<rect x="${x - bw}" y="${t}" width="${bw * 2}" height="${b - t}" fill="${fill}"/>`
    }).join('')
  }
  const volBars = (list, base, bw) => list.map(([x, t, k]) =>
    rect(x - bw, t, bw * 2, base - t, k == 'g' ? '#00e000' : k == 'r' ? '#f01010' : '#bbbbbb')).join('')
  const hist = (list, base, bw, c) => list.map(([x, y]) =>
    rect(x - bw, Math.min(y, base), bw * 2, Math.abs(base - y), c)).join('')

  /* ---------- left price chart (drawn in a 2.376 x 3 zoomed space) ---------- */
  const lEnv = '14,840 30,822 60,815 72,802 288,802 300,780 315,772 625,772 635,735 665,700 680,694 755,694 770,570 785,552 820,550 835,537'
  const lDim = [
    ['g',27,835,865,820,880],['r',43,830,848],['g',57,830,850],['g',72,815,840],['r',87,820,850,815,860],['r',103,835,855],['g',118,838,852],['w',134,832,832,825,840],['r',150,845,849],
    ['r',164,850,900,845,905],['r',180,895,915],['r',195,915,940],['r',210,915,960,915,985],['g',225,910,935],['g',240,855,900],['g',255,845,858],['g',270,838,850],['g',285,822,845],['g',300,795,830],
    ['r',316,775,808],['r',332,800,805],['g',348,790,808],['g',363,785,800],['r',393,795,810],['r',408,808,815],['g',425,795,805],['g',455,795,808],['r',470,790,797],['r',500,790,798],['r',515,795,808],
    ['r',530,795,805],['r',545,810,828],['r',562,822,838],['g',576,808,835],['g',592,790,800],['g',607,788,802],['r',622,790,800],['g',652,735,752],['g',668,712,740],['r',683,703,708],['r',700,700,712],
    ['r',715,703,715],['g',730,708,725],['g',745,708,720],['g',760,685,695],['g',776,570,660],['g',790,555,570],['r',806,555,572],['g',822,565,572],['r',836,550,570],['r',852,572,596],['r',866,592,605],
    ['g',881,605,618],['g',897,590,600],['r',913,585,606,545,610],['r',928,612,642,605,655],['w',944,635,635,625,645],['g',958,628,640,595,640],['g',974,622,632],['r',990,630,650,625,655],['r',1004,635,650],
    ['g',1020,630,640,590,640],['g',1036,640,655],['r',1050,660,692,640,715],['g',1065,677,695,670,740],['g',1080,668,680]]
  const lBright = [
    ['r',1095,675,680,628,700],['r',1111,680,722,680,740],['g',1127,708,718,680,740],['r',1141,710,792,708,820],['g',1157,775,788,765,800],['r',1172,777,802,775,825],['r',1187,805,865,805,880],['g',1203,838,865,808,880],['g',1218,832,840,815,870],['g',1234,802,838,778,840]]

  const lTicks = [72, 149, 226, 303, 381, 458, 535]
  lp.innerHTML =
    rect(6, 69, 452, 476, '#3f3f3f') +
    `<g transform="scale(.4209 .3333)">` +
      rect(14, 535, 1071, 429, '#2c2b5e') +
      poly(`14,964 ${lEnv} 1085,537 1085,964`, '#1f1d76') +
      rect(210, 937, 875, 27, '#17406a') + rect(850, 537, 235, 30, '#45174f') +
      rect(1085, 535, 148, 32, '#5a0000') + rect(1085, 937, 42, 27, '#0a4a0a') +
    `</g>` +
    grid(lTicks, [81, 112, 142, 172, 201, 231, 261, 292, 322, 351, 380, 410, 440, 470, 500, 530], 6, 589, 69, 545) +
    labels([['94.75',81],['94.5',112],['94.25',142],['94',172],['93.75',201],['93.5',231],['93.25',261],['93',292],['92.75',322],['92.5',351],['92.25',380],['92',410],['91.75',440],['91.5',470],['91.25',500],['91',530]], 592) +
    watermark(8) +
    dots(9, 585, 91, '#f01010') + dots(9, 585, 309, '#ffc000') + dots(9, 585, 527, '#00e010') +
    `<g transform="scale(.4209 .3333)">` +
      line('14,535 1085,535', GREEN, 1.400) + line('14,964 1085,964', GREEN, 1.400) +
      line('14,937 180,937 210,964', GREEN, 1.400) + line('14,955 190,955', '#2d7a40', 1) +
      line(lEnv + ' 905,537', GREEN, 1.400) +
      candles(lDim, '#2b7070', '#64185a', 5) +
      line('14,925 60,905 150,905', '#12703c', 2, '6 6') + line('290,900 310,890 360,885 500,870 630,868 660,820 680,795 760,790 780,740 790,665 1040,665', '#12703c', 2, '6 6') +
      line('200,840 280,840', '#64105a', 2, '6 6') + line('1045,570 1060,550', '#7a1030', 2, '6 6') +
      line('1085,552 1120,558 1140,580 1155,625 1190,662 1235,690', '#e01010', 2, '6 7') +
      line('14,920 50,880', '#00b000', 1) + line('105,870 130,850', GREEN, 1) + line('150,850 180,880', GREEN, 1) +
      line('210,905 250,920', GREEN, 1) + line('250,900 290,880 330,830', GREEN, 1) + line('375,812 400,810', GREEN, 2, '10 5') +
      line('430,810 480,800 545,795', GREEN, 1, '10 5') + line('620,800 650,785', GREEN, 1) + line('700,735 730,725', GREEN, 1) + line('735,720 770,700', GREEN, 1) +
      line('820,620 845,605 900,600', GREEN, 1, '12 4') + line('915,605 960,630 1030,630 1090,660 1130,685 1205,790', GREEN, 1) +
      line('14,935 60,860 100,825 145,815', CYAN, 1.200) +
      line('145,815 180,835 220,885 260,902', MAG, 1.200) +
      line('260,902 290,880 330,820 370,785 410,778', CYAN, 1.200) +
      line('410,778 470,790 530,795 580,808', MAG, 1.200) +
      line('580,808 620,805 660,780 700,735 755,690 790,640 830,570 880,550', CYAN, 1.200) +
      line('880,550 910,552 960,590 1010,630 1060,655 1100,680 1140,710 1190,790 1235,842', MAG, 1.200) +
      candles(lBright, '#10e010', '#ff0000', 6) +
      line('1140,592 1385,592', CYAN, 2) + line('1140,739 1385,739', CYAN, 2) +
    `</g>` +
    tag(592, 91, 34, '#f01010', '#fff', '94.67') + tag(592, 178, 33, '#10e010', '#063', '93.94') +
    tag(592, 197, 33, '#00f0ff', '#034', '93.78') + tag(592, 246, 33, '#00f0ff', '#034', '93.37') +
    tag(592, 267, 28, '#00c000', '#032', '93.2') + tag(592, 317, 34, '#f01010', '#fff', '92.78') +
    tag(592, 527, 33, '#10e010', '#063', '91.03')

  /* ---------- left volume ---------- */
  const lVol = [[25,515,'g'],[40,528,'r'],[56,540,'g'],[71,522,'g'],[86,543,'r'],[101,540,'r'],[116,548,'g'],[132,540,'w'],[147,548,'r'],[163,532,'r'],[178,525,'r'],[192,525,'r'],[208,520,'r'],[224,533,'g'],[239,532,'g'],[254,525,'g'],[270,546,'w'],[285,528,'g'],[301,478,'g'],[316,522,'r'],[331,543,'r'],[346,532,'g'],[361,540,'g'],[377,540,'r'],[392,528,'r'],[408,543,'g'],[423,532,'r'],[438,540,'r'],[453,546,'g'],[468,546,'g'],[484,546,'w'],[499,534,'r'],[515,543,'r'],[530,538,'g'],[545,540,'r'],[560,534,'r'],[576,545,'r'],[591,538,'g'],[606,545,'r'],[622,546,'g'],[636,466,'g'],[651,534,'g'],[667,514,'g'],[682,538,'w'],[698,528,'r'],[713,534,'r'],[728,543,'r'],[744,546,'r'],[760,508,'g'],[775,346,'g'],[789,457,'g'],[805,514,'r'],[820,517,'g'],[836,496,'r'],[851,520,'r'],[867,475,'r'],[881,534,'g'],[896,517,'g'],[912,480,'r'],[927,463,'r'],[943,517,'w'],[958,468,'g'],[973,522,'g'],[988,507,'r'],[1003,475,'g'],[1019,460,'g'],[1034,468,'r'],[1050,397,'r'],[1065,423,'g'],[1080,447,'g'],[1095,298,'r'],[1110,364,'r'],[1126,417,'g'],[1141,118,'r'],[1157,396,'g'],[1172,408,'r'],[1188,265,'r'],[1203,360,'g'],[1218,435,'g'],[1234,417,'g']]
  lv.innerHTML =
    grid(lTicks, [598, 624, 649, 675, 700], 6, 589, 573, 724) +
    `<g transform="translate(0 540) scale(.4209 .3333)">` + volBars(lVol, 552, 2.500) + `</g>` +
    labels([['5,000',598],['4,000',624],['3,000',649],['2,000',675],['1,000',700],['0',724]], 592)

  /* ---------- left indicator ---------- */
  li.innerHTML =
    `<clipPath id="licl"><rect x="0" y="752" width="646" height="177"/></clipPath>` +
    `<g clip-path="url(#licl)">` + grid(lTicks, [755, 790, 825, 859, 894, 928], 6, 589, 752, 929) + `</g>` +
    `<g transform="translate(0 540) scale(.4209 .3333)">` +
      line('14,877 1385,877', '#888', 1) + line('14,914 1385,914', '#888', 1) + line('14,1097 1385,1097', '#888', 1) +
      hist([[25,783],[40,768],[56,753],[71,735],[270,870],[285,850],[301,813],[316,805],[331,803],[346,797],[361,795],[636,877],[651,852],[667,825],[682,803],[698,795],[760,808],[775,747],[789,706],[805,693],[820,690]], 877, 2.500, '#10e010') +
      hist([[86,750],[101,762],[116,768],[132,778],[147,792],[163,830],[377,803],[392,822],[408,833],[423,846],[438,855],[453,857],[468,858],[484,860],[499,862],[713,800],[728,808],[744,812],[836,705],[851,732],[867,765],[881,792],[896,813],[912,843]], 877, 2.500, '#0c640c') +
      hist([[192,905],[208,933],[224,940],[530,880],[545,905],[560,923],[576,915],[927,885],[943,912],[958,933],[973,945],[988,965],[1003,975],[1019,985],[1034,1000],[1050,1015],[1065,1025],[1080,1027],[1095,1030],[1110,1042],[1126,1050],[1141,1090],[1157,1105],[1172,1120],[1187,1160]], 877, 2.500, '#f01010') +
      hist([[239,910],[254,888],[591,903],[606,903],[622,900],[1203,1150],[1218,1150],[1234,1112]], 877, 2.500, '#7a0808') +
      line('14,1050 50,960 85,895 110,880 150,850 180,905 210,915 250,960 285,985 320,960 380,935 410,943 440,937 500,912 530,915 565,960 625,978 660,925 700,870', '#f0e010', 1.200) +
      line('700,870 760,830 800,745 850,645 890,658 915,652 945,690 975,700 1015,745 1080,878', '#10e010', 1.200) +
      line('1080,878 1130,925 1170,918 1205,880', '#f0e010', 1.200) + line('1205,880 1220,862 1235,870', '#10e010', 1.200) +
      line('14,1108 50,1010 85,935 100,920', '#f0e010', 1.200) + line('100,920 140,880', '#10c010', 1.200) +
      line('140,880 180,945 210,955 245,990 285,1033 320,1010 380,980 410,988 460,975 500,955 530,958 565,1010 625,1030 660,975 690,920', '#f0e010', 1.200) +
      line('690,920 700,905 760,862 810,720 850,645 890,658 915,652 945,695 975,708 1015,755 1080,885', '#10e010', 1.200) +
      line('1080,885 1130,970 1170,960 1205,915', '#f0e010', 1.200) + line('1205,915 1225,895 1235,905', '#10e010', 1.200) +
      line('14,858 50,775 85,748 120,750 150,762 180,820 210,885 240,916 265,905 295,880 330,825 375,802 410,815 440,840 500,860 540,885 570,912 625,912 660,870 700,815 760,802 790,730 830,697 850,697 880,730 915,795 950,875 990,945 1030,985 1075,1030 1120,1060 1150,1105 1190,1150 1215,1165 1235,1157', '#eca8a8', 1.200) +
    `</g>` +
    labels([['100%',755],['80%',790],['60%',825],['40%',859],['20%',894],['0%',928]], 592) +
    [['4:00',72],['5:00',149],['6:00',226],['7:00',303],['8:00',381],['9:00',458],['10:00',535]].map(([t, x]) => `<text x="${x}" y="943" fill="#7d5a2a" font-size="11">${t}</text>`).join('')

  /* ---------- right price chart (2.904 x 3 zoomed space, origin 960,60) ---------- */
  const rTicks = [972, 1027, 1088, 1154, 1220, 1286, 1352, 1418]
  const rEnv = '60,802 570,802 585,793 620,793 650,760 907,760 925,690 950,660 970,595 1115,595 1130,515'
  const rDim = [
    ['g',925,720,760],['g',938,690,715],['g',953,665,690],['g',970,635,660],['r',987,640,680,625,690],['r',1002,680,700],['r',1018,692,705],['g',1034,677,710,660,725],['g',1050,640,670],['g',1065,620,670],['g',1082,620,640],['r',1097,640,650],['r',1110,655,665],['g',1115,610,640],
    ['r',650,765,785],['r',745,790,805],['r',763,800,815],['r',778,815,832,810,858],['g',795,795,832],['r',812,803,825],['r',827,825,845],['w',841,845,845,840,858],['g',857,830,840],['g',873,828,840],['g',890,800,830],['g',906,780,805],
    ['g',585,800,825],['g',490,825,840],['r',510,822,833],['r',525,825,835],['g',155,825,840],['r',105,825,835],['g',205,822,835],['g',225,828,838],['r',250,830,838],['g',320,838,850],['r',360,835,848],['g',440,845,852],['g',470,845,852],['g',540,830,845],['g',605,805,815],['g',640,775,795],['g',700,785,795],['g',730,770,780]]
  const rBright = [
    ['g',1147,390,516,335,520],['g',1161,218,392,195,400],['g',1178,178,217,110,220],['r',1193,175,188,92,190],['w',1210,188,188,150,210],['r',1225,182,225,182,245],['r',1243,226,285,216,310],['r',1257,285,310,252,326],['g',1275,220,315,220,320],['r',1289,220,238,210,250]]

  rp.innerHTML =
    rect(964, 69, 388, 520, '#3f3f3f') +
    `<g transform="translate(960 60) scale(.3444 .3333)">` +
      poly('58,112 188,112 204,338 268,338 284,502 1130,502 1130,860 58,860', '#2c2b5e') +
      poly(`60,860 ${rEnv} 1130,860`, '#1f1d76') +
      rect(890, 832, 240, 26, '#17406a') + rect(1130, 832, 158, 26, '#0a4a0a') + rect(1002, 600, 46, 32, '#4a1a60') + rect(1208, 93, 80, 80, '#5a0000') +
    `</g>` +
    grid(rTicks, [86, 117, 148, 180, 211, 242, 274, 305, 335, 368, 399, 430, 461, 492, 524, 555, 587], 964, 1465, 69, 589) +
    labels([['4.02',86],['4',117],['3.98',148],['3.96',180],['3.94',211],['3.92',242],['3.9',274],['3.88',305],['3.86',335],['3.84',368],['3.82',397],['3.8',429],['3.78',461],['3.76',492],['3.74',524],['3.72',555],['3.7',587]], 1467) +
    watermark(967) +
    dots(968, 1460, 141, '#f01010') + dots(968, 1460, 356, '#ffc000') + dots(968, 1460, 570, '#00e010') +
    `<g transform="translate(960 60) scale(.3444 .3333)">` +
      line('14,650 555,650', '#6a1a2a', 1) +
      line('58,112 188,112 204,338 268,338 284,502 1130,502 1130,515', GREEN, 1.400) + line('60,860 1130,860', GREEN, 1.400) +
      line('380,857 780,858', GREEN, 2) + line(rEnv, GREEN, 1.400) + line('60,822 100,825 120,843 300,843 320,850 370,850 380,857', GREEN, 1) +
      candles(rDim, '#2b7070', '#64185a', 6) +
      line('100,810 570,815', '#64105a', 1.500, '6 6') + line('780,765 890,778', '#64105a', 1.500, '6 6') +
      line('575,850 640,822 750,815', '#12703c', 2, '6 6') + line('920,850 960,790 1000,787 1110,787 1130,765', '#12703c', 2, '6 6') +
      line('1135,735 1165,590', GREEN, 2, '6 5') + line('1210,418 1290,418', GREEN, 2, '6 7') +
      line('1185,430 1215,330', GREEN, 1) + line('1225,310 1260,300', GREEN, 1) + line('1280,280 1290,275', GREEN, 1) + line('1050,690 1080,672', GREEN, 1) + line('1000,705 1030,705', GREEN, 1) + line('950,750 975,720', GREEN, 1) + line('905,800 930,770', GREEN, 1) + line('860,825 890,815', GREEN, 1) +
      line('14,818 90,820 170,833 270,835', MAG, 1.200) + line('270,835 300,835', CYAN, 1.200) + line('300,835 340,835 420,848 480,850', MAG, 1.200) +
      line('480,850 570,830 640,800 690,780 735,773', CYAN, 1.200) + line('735,773 760,775 830,815 875,835', MAG, 1.200) +
      line('875,835 905,832 950,770 985,705 1020,665 1060,640 1100,630 1130,610 1160,560 1190,380 1215,245 1240,170 1265,137 1290,133', CYAN, 1.200) +
      candles(rBright, '#10e010', '#ff0000', 6) +
      line('1195,112 1450,112', CYAN, 2) + line('1195,727 1450,727', CYAN, 2) +
    `</g>` +
    tag(1467, 97, 34, '#00f0ff', '#034', '4.012') + tag(1467, 138, 34, '#f01010', '#fff', '3.986') +
    tag(1467, 227, 34, '#10e010', '#063', '3.929') + tag(1467, 302, 34, '#00f0ff', '#034', '3.881') +
    tag(1467, 343, 34, '#f01010', '#fff', '3.855') + tag(1467, 570, 28, '#10e010', '#063', '3.71')

  /* ---------- right volume ---------- */
  rv.innerHTML =
    grid(rTicks, [622, 656, 691, 726], 964, 1465, 617, 759) +
    `<g transform="translate(1280 500) scale(.4057 .3333)">` +
      volBars([[5,762,'g'],[20,757,'g'],[34,723,'g'],[47,765,'r'],[61,756,'r'],[74,762,'r'],[88,735,'g'],[101,770,'r'],[115,741,'g'],[128,756,'r'],[143,762,'r'],[156,750,'g'],[170,700,'g'],[182,423,'g'],[197,443,'g'],[209,366,'g'],[224,552,'r'],[236,618,'w'],[250,651,'r'],[264,588,'r'],[278,686,'r'],[291,642,'g'],[305,750,'r']], 777, 2.500) +
    `</g><g transform="translate(640 540) scale(.4209 .3333)">` +
      volBars([[1397,642,'r'],[1408,655,'g'],[1422,645,'r'],[1435,650,'r'],[1449,654,'w'],[1475,651,'g'],[1487,651,'g'],[1500,650,'g'],[1514,642,'g'],[1527,642,'g'],[1539,636,'g'],[1553,603,'g'],[1565,645,'r']], 658, 2.500) +
    `</g>` +
    labels([['8,000',622],['6,000',656],['4,000',691],['2,000',726],['0',758]], 1467)

  /* ---------- right indicator ---------- */
  ri.innerHTML =
    `<clipPath id="ricl"><rect x="961" y="787" width="561" height="142"/></clipPath>` +
    `<g clip-path="url(#ricl)">` + grid(rTicks, [789, 816, 845, 873, 902, 928], 964, 1465, 787, 929) + `</g>` +
    `<line x1="964" x2="1460" y1="879" y2="879" stroke="#999"/><line x1="964" x2="1200" y1="878.500" y2="878.500" stroke="#e8a0a0" stroke-dasharray="6 10"/>` +
    `<g transform="translate(640 540) scale(.4209 .3333)">` +
      line('772,1120 795,1080 825,1075 840,1065 865,1080 915,1092 925,1082 955,1080 975,1100 1055,1140 1085,1140 1100,1155 1130,1155 1150,1165 1180,1160 1218,1165 1270,1100 1305,1040 1340,1018', '#f0e010', 1.500) +
      line('1340,1018 1358,997 1375,1010', '#10e010', 1.500) +
      line('1375,1010 1390,1030 1435,1078 1450,1082 1475,1105 1503,1098 1535,1050', '#f0e010', 1.500) +
    `</g><g transform="translate(1280 500) scale(.4057 .3333)">` +
      hist([[196,1118],[210,1110],[224,1107],[237,1107],[250,1112],[170,1128],[182,1125],[20,1130],[34,1128],[115,1130]], 1138, 2.500, '#10e010') +
      hist([[278,1120],[291,1120],[305,1120]], 1138, 2.500, '#0c640c') +
      rect(261, 865, 8, 273, '#10e010') +
      line('0,1135 100,1130 180,1130 260,1110 307,1118', '#eca8a8', 1.200) +
      line('-37,1190 30,1135', '#f0e010', 1.500) +
      line('30,1135 65,1092 90,1082 130,1045 155,1030 175,1000 210,930 240,875 258,865 278,880 307,885', '#10e010', 1.500) +
    `</g>` +
    labels([['100%',789],['80%',817],['60%',845],['40%',874],['20%',902],['0%',928]], 1467) +
    [['3:00',972],['4:00',1027],['5:00',1088],['6:00',1154],['7:00',1220],['8:00',1286],['9:00',1352],['10:00',1418]].map(([t, x]) => `<text x="${x}" y="943" fill="#7d5a2a" font-size="11">${t}</text>`).join('')

  /* ---------- order ladders: rows hidden behind the comment boxes carry no text ---------- */
  const cell = 'border-r border-b border-[#222]'
  const plFor = i => i < 4 ? '$4,...' : i < 7 ? '$5,...' : i < 24 ? '$8,...' : i < 29 ? '$9,...' : '$1 ...'
  let lHtml = '', rHtml = ''
  for (let i = 0; i < 35; i++) {
    const lHid = i >= 7 && i <= 20, rHid = i >= 13 && i <= 22
    lHtml += `<div class="flex h-[21px] leading-[21px]">
      <div class="w-[98px] ${cell}"></div><div class="w-[40px] ${cell}"></div><div class="w-[29px] bg-[#021a02] ${cell}"></div>
      <div class="w-[40px] pl-[9px] text-white ${cell}">${lHid ? '' : '93...'}</div><div class="w-[29px] bg-[#2a0202] ${cell}"></div>
      <div class="w-[29px] bg-[#04473a] text-[#00e890] text-center ${cell}">${lHid ? '' : plFor(i)}</div></div>`
    rHtml += `<div class="flex h-[21px] leading-[21px]">
      <div class="w-[56px] ${cell}"></div><div class="w-[81px] ${cell}"></div><div class="w-[37px] bg-[#021a02] ${cell}"></div>
      <div class="w-[57px] pl-[20px] text-white ${cell}">${rHid ? '' : (4.003 - i * .001).toFixed(3)}</div><div class="w-[37px] bg-[#2a0202] ${cell}"></div>
      <div class="w-[82px] ${cell}"></div></div>`
  }
  lrows.innerHTML = lHtml
  rrows.innerHTML = rHtml

  /* ---------- side tabs ---------- */
  const tabs = [
    ['Trade', 'h-[40px] mt-[3px]', 0], ['Times And Sales', 'h-[93px] mt-[15px]', 0], ['Active Trader', 'h-[77px] mt-[7px]', 1],
    ['Big Buttons', 'h-[69px] mt-[7px]', 0], ['Chart', 'h-[38px] mt-[5px]', 1], ['Dashboard', 'h-[70px] mt-[12px]', 0],
    ['Level II', 'h-[45px] mt-[5px]', 0], ['Live News', 'h-[60px] mt-[8px]', 0]]
  const railHtml = tabs.map(([t, c, on]) =>
    `<div class="${c} w-[16px] shrink-0 rounded-[7px] bg-[#222] border border-[#111] flex items-center justify-center text-[11px] tracking-[.4px] whitespace-nowrap [writing-mode:vertical-rl] rotate-180 ${on ? 'text-[#e0b000]' : 'text-[#999]'}">${t}</div>`).join('')
  lrail.innerHTML = railHtml
  rrail.innerHTML = railHtml
</script>
</body>
</html>
